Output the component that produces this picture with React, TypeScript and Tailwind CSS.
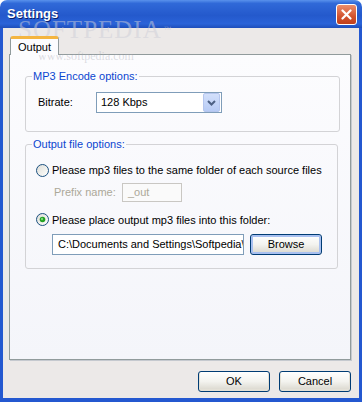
import React from "react";

function Radio({ checked }: { checked?: boolean }) {
  return (
    <svg width="13" height="13" viewBox="0 0 13 13" className="shrink-0">
      <defs>
        <linearGradient id={checked ? "rg1" : "rg0"} x1="0" y1="0" x2="1" y2="1">
          <stop offset="0" stopColor="#DCDCD7" />
          <stop offset="0.6" stopColor="#F2F2EE" />
          <stop offset="1" stopColor="#FFFFFF" />
        </linearGradient>
      </defs>
      <circle cx="6.5" cy="6.5" r="6" fill={`url(#${checked ? "rg1" : "rg0"})`} stroke="#1C5180" strokeWidth="1" />
      {checked && (
        <>
          <circle cx="6.5" cy="6.5" r="2.8" fill="#21A121" />
          <circle cx="6" cy="6" r="1.2" fill="#7BD77B" />
        </>
      )}
    </svg>
  );
}

function XPButton({ children, focused, className }: { children: React.ReactNode; focused?: boolean; className?: string }) {
  return (
    <div
      className={`flex items-center justify-center rounded-[3px] border border-[#003C74] bg-gradient-to-b from-[#FFFFFF] via-[#F3F3EF] to-[#D8D5CB] text-[11px] text-black ${
        focused ? "shadow-[inset_0_0_0_2px_#A8C0F0]" : "shadow-[inset_0_-1px_0_1px_#E3E0D6]"
      } ${className ?? ""}`}
    >
      {children}
    </div>
  );
}

export default function App() {
  return (
    <div className="relative w-[362px] h-[402px] flex flex-col overflow-hidden font-['Liberation_Sans',Arial,sans-serif] text-[11px] text-black">
      {/* Title bar */}
      <div className="h-[28px] shrink-0 rounded-t-[7px] flex items-center justify-between pl-[7px] pr-[5px] bg-[linear-gradient(to_bottom,#5A92EC_0%,#3069D8_12%,#2459CC_55%,#2A63D8_85%,#1E4EBA_100%)]">
        <span className="text-white font-bold text-[13px] [text-shadow:1px_1px_0_#0A1E6A]">Settings</span>
        <div className="w-[21px] h-[21px] rounded-[3px] border border-white flex items-center justify-center bg-[linear-gradient(to_bottom,#EC8E6C,#D2532F_60%,#C0401C)]">
          <svg width="11" height="11" viewBox="0 0 11 11">
            <path d="M1.5 1.5 L9.5 9.5 M9.5 1.5 L1.5 9.5" stroke="white" strokeWidth="2.2" strokeLinecap="round" />
          </svg>
        </div>
      </div>

      {/* Client */}
      <div className="flex-1 flex flex-col bg-[#ECE9E8] border-x-[3px] border-b-[4px] border-[#2458D0] pt-[8px] pl-[6px] pr-[8px]">
        {/* Tab strip */}
        <div className="h-[19px] flex relative z-10 -mb-px">
          <div className="ml-[1px] w-[49px] h-[19px] bg-[#FCFCFE] border-x border-[#919B9C] border-t-[3px] border-t-[#F4B540] rounded-t-[3px] flex items-start pt-[2px] pl-[7px] leading-[13px]">
            Output
          </div>
        </div>

        {/* Panel */}
        <div className="h-[306px] border border-[#919B9C] shadow-[1px_1px_0_#C5C9CF] bg-[linear-gradient(to_bottom,#FCFCFE,#F4F5FA)] pt-[15px] pl-[15px] pr-[10px] flex flex-col">
          <fieldset className="w-[315px] h-[62px] border border-[#D3D3D6] rounded-[3px] pl-[6px] pr-[6px] m-0">
            <legend className="px-[1px] text-[#0B46D0] leading-[13px]">MP3 Encode options:</legend>
            <div className="flex items-center mt-[9px] pl-[6px]">
              <span className="w-[58px]">Bitrate:</span>
              <div className="w-[126px] h-[21px] border border-[#7F9DB9] bg-white flex items-center justify-between pl-[4px] pr-[1px]">
                <span>128 Kbps</span>
                <div className="w-[17px] h-[19px] rounded-[2px] border border-[#B5C6EE] bg-[linear-gradient(to_bottom,#D3E0FB,#B7CBF5)] flex items-center justify-center">
                  <svg width="9" height="6" viewBox="0 0 9 6">
                    <path d="M1 1 L4.5 4.5 L8 1" stroke="#4D6185" strokeWidth="2" fill="none" />
                  </svg>
                </div>
              </div>
            </div>
          </fieldset>

          <fieldset className="w-[313px] h-[131px] mt-[6px] border border-[#D3D3D6] rounded-[3px] pl-[6px] pr-[6px] m-0">
            <legend className="px-[1px] text-[#0B46D0] leading-[13px]">Output file options:</legend>
            <div className="flex flex-col pl-[4px] pt-[11px] whitespace-nowrap">
              <div className="flex items-center gap-[3px]">
                <Radio />
                <span>Please mp3 files to the same folder of each source files</span>
              </div>
              <div className="flex items-center mt-[4px] pl-[18px]">
                <span className="w-[68px] text-[#ACA899]">Prefix name:</span>
                <div className="w-[60px] h-[19px] border border-[#C9C7C3] bg-[#FAFAFA] flex items-center pl-[5px] text-[#ACA899]">_out</div>
              </div>
              <div className="flex items-center gap-[3px] mt-[10px]">
                <Radio checked />
                <span>Please place output mp3 files into this folder:</span>
              </div>
              <div className="flex items-center mt-[6px] pl-[16px]">
                <div className="w-[192px] h-[21px] border border-[#7F9DB9] bg-white flex items-center pl-[5px] overflow-hidden">
                  C:\Documents and Settings\Softpedia\
                </div>
                <XPButton focused className="ml-[6px] w-[72px] h-[21px]">Browse</XPButton>
              </div>
            </div>
          </fieldset>
        </div>

        {/* Buttons */}
        <div className="flex justify-end gap-[9px] mt-[11px]">
          <XPButton className="w-[72px] h-[21px]">OK</XPButton>
          <XPButton className="w-[72px] h-[21px]">Cancel</XPButton>
        </div>
      </div>

      {/* Watermark overlay */}
      <div className="absolute left-[18px] top-[17px] pointer-events-none font-['Liberation_Serif',serif] text-[25px] leading-[25px] tracking-[1px] text-[rgba(205,205,215,0.5)]">
        SOFTPEDIA<span className="text-[8px] align-top ml-[2px]">™</span>
      </div>
      <div className="absolute left-[38px] top-[47px] pointer-events-none font-['Liberation_Serif',serif] text-[12px] text-[rgba(170,170,180,0.4)]">
        www.softpedia.com
      </div>
    </div>
  );
}
